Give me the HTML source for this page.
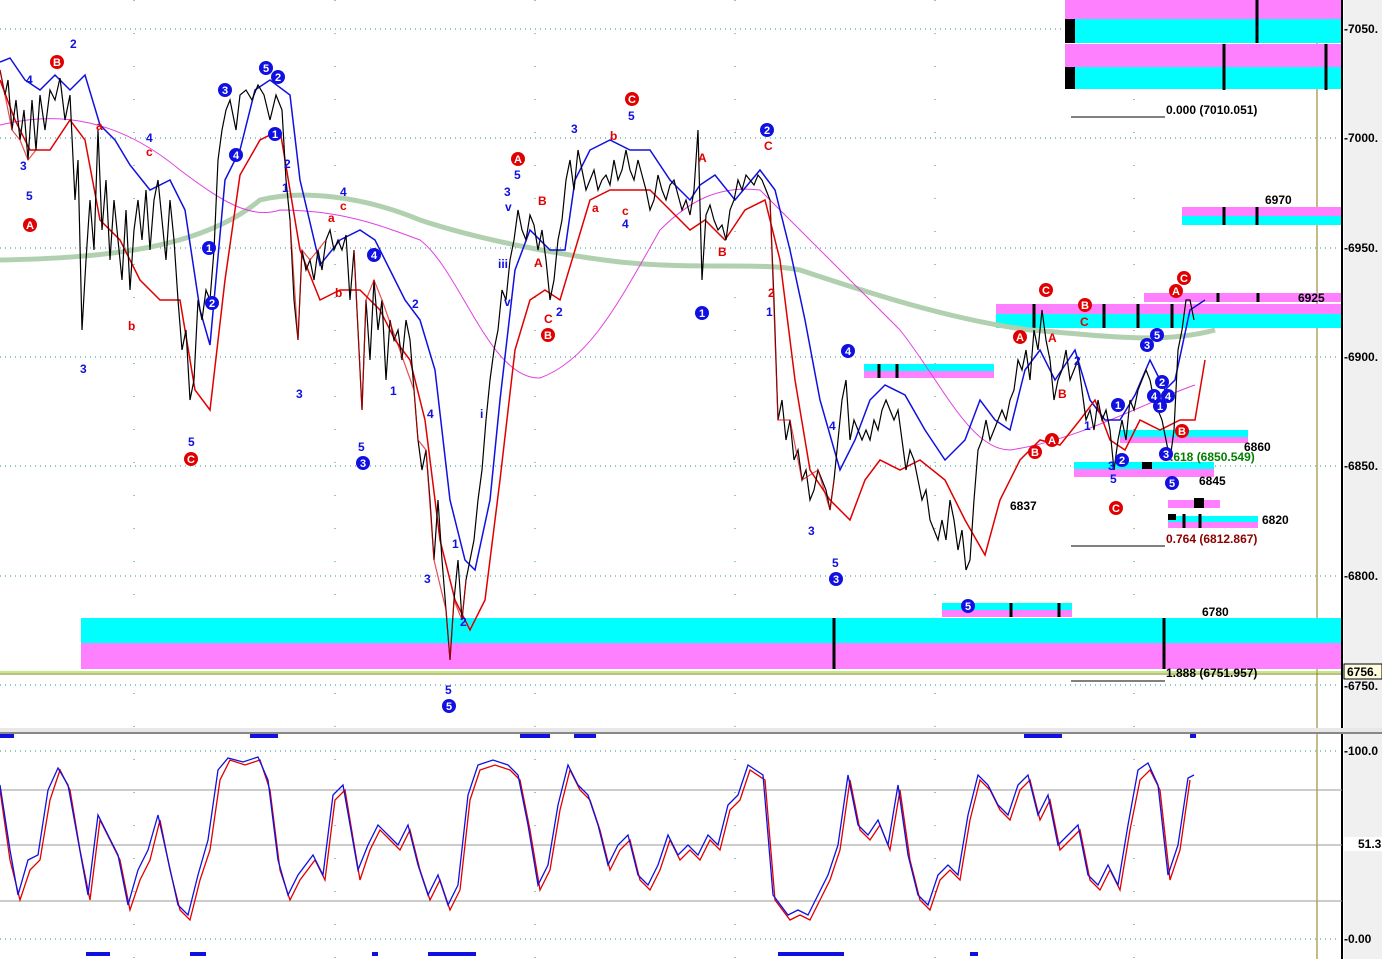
<!DOCTYPE html>
<html><head><meta charset="utf-8">
<style>
html,body{margin:0;padding:0;background:#fff;}
svg{display:block;font-family:"Liberation Sans",sans-serif;}
.t{font-size:12px;font-weight:bold;fill:#000}
.b{font-size:12px;font-weight:bold;fill:#1010e0}
.r{font-size:12px;font-weight:bold;fill:#e00000}
</style></head><body>
<svg width="1382" height="959" viewBox="0 0 1382 959">
<rect x="0" y="0" width="1382" height="959" fill="#fff"/>
<rect x="1344" y="0" width="38" height="959" fill="#f0f0f0"/>
<g stroke="#2a9090" stroke-width="1" stroke-dasharray="1,4">
<line x1="0" y1="29" x2="1340" y2="29"/><line x1="0" y1="138" x2="1340" y2="138"/>
<line x1="0" y1="248" x2="1340" y2="248"/><line x1="0" y1="357" x2="1340" y2="357"/>
<line x1="0" y1="466" x2="1340" y2="466"/><line x1="0" y1="576" x2="1340" y2="576"/>
<line x1="0" y1="685" x2="1340" y2="685"/><line x1="0" y1="751" x2="1340" y2="751"/>
<line x1="0" y1="939" x2="1340" y2="939"/>
</g>
<g stroke="#2a9090" stroke-dasharray="1,32">
<line x1="134" y1="0" x2="134" y2="959"/><line x1="335" y1="0" x2="335" y2="959"/><line x1="535" y1="0" x2="535" y2="959"/><line x1="735" y1="0" x2="735" y2="959"/><line x1="935" y1="0" x2="935" y2="959"/><line x1="1134" y1="0" x2="1134" y2="959"/>
</g>
<line x1="1317" y1="0" x2="1317" y2="728" stroke="#8a7a10"/>
<line x1="1317" y1="733" x2="1317" y2="959" stroke="#8a7a10"/>
<rect x="1065" y="0" width="277" height="19" fill="#ff80ff"/>
<rect x="1065" y="19" width="277" height="24" fill="#00ffff"/>
<rect x="1065" y="44" width="277" height="23" fill="#ff80ff"/>
<rect x="1065" y="67" width="277" height="22" fill="#00ffff"/>
<rect x="1065" y="19" width="10" height="24" fill="#000"/><rect x="1065" y="67" width="10" height="22" fill="#000"/>
<g stroke="#000" stroke-width="3"><line x1="1257" y1="0" x2="1257" y2="43"/><line x1="1224" y1="44" x2="1224" y2="90"/><line x1="1326" y1="44" x2="1326" y2="90"/></g>
<rect x="1182" y="207" width="160" height="9" fill="#ff80ff"/><rect x="1182" y="216" width="160" height="9" fill="#00ffff"/>
<rect x="996" y="304" width="346" height="10" fill="#ff80ff"/><rect x="996" y="314" width="346" height="14" fill="#00ffff"/>
<rect x="1144" y="293" width="198" height="9" fill="#ff80ff"/>
<rect x="864" y="364" width="130" height="7" fill="#00ffff"/><rect x="864" y="371" width="130" height="7" fill="#ff80ff"/>
<rect x="1120" y="430" width="128" height="7" fill="#00ffff"/><rect x="1120" y="437" width="128" height="6" fill="#ff80ff"/>
<rect x="1074" y="462" width="140" height="7" fill="#00ffff"/><rect x="1074" y="469" width="140" height="8" fill="#ff80ff"/>
<rect x="1168" y="500" width="52" height="8" fill="#ff80ff"/><rect x="1168" y="516" width="90" height="6" fill="#00ffff"/><rect x="1168" y="522" width="90" height="6" fill="#ff80ff"/>
<rect x="942" y="603" width="130" height="7" fill="#00ffff"/><rect x="942" y="610" width="130" height="7" fill="#ff80ff"/>
<rect x="81" y="618" width="1261" height="25" fill="#00ffff"/><rect x="81" y="643" width="1261" height="26" fill="#ff80ff"/>
<g stroke="#000" stroke-width="3">
<line x1="834" y1="618" x2="834" y2="669"/><line x1="1164" y1="618" x2="1164" y2="669"/>
<line x1="1224" y1="207" x2="1224" y2="225"/><line x1="1257" y1="207" x2="1257" y2="225"/>
<line x1="1034" y1="304" x2="1034" y2="328"/><line x1="1104" y1="304" x2="1104" y2="328"/><line x1="1138" y1="304" x2="1138" y2="328"/><line x1="1172" y1="304" x2="1172" y2="328"/><line x1="1218" y1="293" x2="1218" y2="302"/><line x1="1258" y1="293" x2="1258" y2="302"/>
<line x1="879" y1="364" x2="879" y2="378"/><line x1="897" y1="364" x2="897" y2="378"/>
<line x1="1011" y1="603" x2="1011" y2="617"/><line x1="1059" y1="603" x2="1059" y2="617"/>
<line x1="1184" y1="514" x2="1184" y2="528"/><line x1="1200" y1="514" x2="1200" y2="528"/>
</g>
<rect x="1194" y="498" width="10" height="10" fill="#000"/><rect x="1168" y="514" width="8" height="6" fill="#000"/><rect x="1142" y="462" width="10" height="7" fill="#000"/>
<line x1="0" y1="672" x2="1342" y2="672" stroke="#7fdc00"/>
<line x1="0" y1="674" x2="1342" y2="674" stroke="#8a7a10"/>
<g stroke="#000"><line x1="1071" y1="117" x2="1165" y2="117"/><line x1="1071" y1="546" x2="1165" y2="546"/><line x1="1071" y1="681" x2="1165" y2="681"/></g>
<text x="1166" y="114" class="t">0.000 (7010.051)</text>
<text x="1166" y="543" class="t" style="fill:#8b0000">0.764 (6812.867)</text>
<text x="1166" y="677" class="t">1.888 (6751.957)</text>
<text x="1170" y="461" class="t" style="fill:#008000">.618 (6850.549)</text>
<text x="1265" y="204" class="t">6970</text><text x="1298" y="302" class="t">6925</text>
<text x="1244" y="451" class="t">6860</text><text x="1199" y="485" class="t">6845</text>
<text x="1262" y="524" class="t">6820</text><text x="1010" y="510" class="t">6837</text><text x="1202" y="616" class="t">6780</text>
<path d="M0,260 C100,258 200,250 260,200 C300,190 360,195 420,220 C480,240 560,255 620,262 C700,270 760,262 800,270 C860,290 950,320 1030,330 C1100,335 1160,345 1215,330" fill="none" stroke="#b0d0b0" stroke-width="5"/>
<path d="M0,125 C60,110 120,120 180,170 C220,200 250,220 280,210 C340,210 380,225 420,240 C460,270 490,380 540,378 C590,360 620,300 660,230 C690,200 720,185 760,190 C800,230 850,280 900,330 C940,380 970,450 1010,450 C1080,440 1150,400 1195,385" fill="none" stroke="#e040e0" stroke-width="1"/>
<path d="M0,62 10,58 25,80 40,90 55,75 70,90 85,75 100,125 115,140 130,165 150,190 170,180 185,210 200,310 210,345 225,180 240,150 255,90 270,80 290,95 300,180 320,265 340,240 360,230 375,240 390,270 405,300 420,320 435,370 450,500 465,560 475,570 490,500 500,400 515,270 530,230 550,250 565,250 575,180 590,150 610,140 630,150 650,150 670,180 690,200 700,185 715,175 735,200 760,170 775,190 790,250 805,320 820,400 840,470 855,440 870,400 885,385 905,395 925,430 945,460 965,440 980,400 995,420 1010,430 1025,370 1040,350 1055,380 1075,350 1090,400 1105,420 1120,420 1135,395 1150,360 1165,390 1175,380 1190,310 1205,300" fill="none" stroke="#1010e0" stroke-width="1.5"/>
<path d="M0,80 15,120 30,150 50,150 70,120 85,140 100,220 120,240 140,280 160,300 180,300 195,390 210,410 225,280 240,175 260,140 280,130 300,250 320,300 340,290 360,290 380,310 395,340 410,360 425,420 440,540 455,600 470,630 485,600 500,480 515,350 530,300 545,290 560,300 575,250 590,200 610,190 630,190 650,190 670,210 690,230 705,220 725,240 745,210 765,200 780,260 795,380 810,470 830,500 850,520 865,480 880,460 900,470 920,460 945,480 965,520 985,555 1000,500 1020,460 1040,440 1060,445 1080,420 1095,400 1110,440 1125,450 1140,420 1160,430 1180,420 1195,420 1205,360" fill="none" stroke="#e00000" stroke-width="1.5"/>
<path d="M0,70 5,95 8,80 12,130 16,100 20,140 24,110 28,160 32,100 36,150 40,95 45,130 50,90 55,100 60,78 65,120 70,95 75,200 78,160 82,330 86,260 90,200 94,250 98,130 102,230 106,180 110,260 114,200 118,240 122,280 126,210 130,290 134,230 138,200 142,240 146,190 150,250 154,200 158,180 162,220 166,260 170,200 174,240 178,300 182,350 186,330 190,400 194,380 198,300 202,320 206,290 210,300 214,250 218,160 222,130 226,110 230,100 236,130 240,95 246,90 252,100 258,85 264,95 270,120 276,95 282,110 286,180 290,220 294,300 298,340 302,250 306,270 310,260 314,280 318,250 322,270 326,240 330,230 334,250 338,240 342,250 346,235 350,300 354,250 358,330 362,410 366,300 370,360 374,280 378,330 382,300 386,380 390,320 394,340 398,330 402,360 406,320 410,340 414,390 418,440 422,470 426,450 430,500 434,560 438,500 442,560 446,610 450,660 454,600 458,560 462,620 466,580 470,560 474,540 478,500 482,470 486,420 490,380 494,350 498,330 502,290 506,300 510,260 514,240 518,210 522,230 526,240 530,215 534,225 538,250 542,230 546,260 550,300 554,280 558,240 562,220 566,180 570,160 574,190 578,150 582,170 586,190 590,180 594,170 598,190 602,180 606,175 610,185 614,160 618,180 622,170 626,150 630,170 634,180 638,160 642,175 646,190 650,210 654,200 658,175 662,190 666,200 670,185 674,180 678,195 682,210 686,200 690,215 694,190 698,130 702,280 706,215 710,205 714,220 718,230 722,225 726,240 730,210 734,200 738,180 742,190 746,175 750,180 754,185 758,175 762,180 766,190 770,200 774,300 778,420 782,400 786,440 790,420 794,460 798,450 802,480 806,470 810,500 814,490 818,470 822,480 826,490 830,510 834,480 838,440 842,400 846,380 850,440 854,420 858,430 862,440 866,430 870,440 874,420 878,430 882,410 886,400 890,410 894,420 898,410 902,440 906,470 910,450 914,460 918,480 922,500 926,490 930,520 934,530 938,540 942,520 946,540 950,500 954,520 958,550 962,530 966,570 970,560 974,500 978,450 982,440 986,420 990,440 994,430 998,420 1002,410 1006,420 1010,400 1014,390 1018,360 1022,370 1026,350 1030,380 1034,330 1038,350 1042,310 1046,340 1050,360 1054,400 1058,380 1062,370 1066,350 1070,380 1074,370 1078,360 1082,390 1086,420 1090,410 1094,430 1098,400 1102,420 1106,410 1110,430 1114,470 1118,440 1122,420 1126,440 1130,400 1134,410 1138,390 1142,380 1146,370 1150,380 1154,400 1158,410 1162,420 1166,440 1170,460 1174,430 1178,350 1182,330 1186,300 1190,300 1194,320" fill="none" stroke="#000" stroke-width="1.2"/>
<path d="M0,70 5,95 12,130 20,140 28,160 36,150 M290,220 298,340 302,250 310,260 318,250 326,240 M354,250 362,410 366,300 374,280 382,300 414,390 418,440 426,450 434,560 446,610 450,660 454,600 462,620 466,580 M770,200 778,420 790,420 802,480 818,470 830,510 834,480" fill="none" stroke="#e00000" stroke-width="1.2" opacity="0.7"/>
<line x1="1342" y1="0" x2="1342" y2="728" stroke="#000" stroke-width="2"/>
<line x1="1342" y1="733" x2="1342" y2="959" stroke="#000" stroke-width="2"/>
<g><text x="1344" y="33" class="t">-7050.</text><text x="1344" y="142" class="t">-7000.</text><text x="1344" y="252" class="t">-6950.</text><text x="1344" y="361" class="t">-6900.</text><text x="1344" y="470" class="t">-6850.</text><text x="1344" y="580" class="t">-6800.</text><text x="1344" y="690" class="t">-6750.</text>
<text x="1344" y="755" class="t">-100.0</text><text x="1344" y="943" class="t">-0.00</text></g>
<rect x="1344" y="664" width="38" height="15" fill="#ffffe0" stroke="#000"/><text x="1347" y="676" class="t">6756.</text>
<rect x="1344" y="837" width="38" height="14" fill="#fff"/><text x="1358" y="848" class="t">51.3</text>
<rect x="0" y="728" width="1382" height="5" fill="#e8e8e8"/><line x1="0" y1="733" x2="1382" y2="733" stroke="#888" stroke-width="2"/>
<g stroke="#999"><line x1="0" y1="790" x2="1342" y2="790"/><line x1="0" y1="845" x2="1342" y2="845"/><line x1="0" y1="901" x2="1342" y2="901"/></g>
<path d="M0,790 10,860 20,900 30,870 40,860 50,800 60,770 70,790 80,850 90,900 100,820 110,840 120,860 130,910 140,880 150,860 160,820 170,870 180,910 190,920 200,880 210,850 220,780 230,760 245,765 260,760 270,790 280,870 290,900 300,880 315,860 325,880 335,800 345,790 360,880 370,850 380,830 390,840 400,850 410,830 420,870 430,900 440,880 450,910 460,890 470,800 480,770 495,765 510,770 520,780 530,830 540,890 550,870 560,810 570,770 580,790 590,800 600,830 610,870 620,850 630,840 640,880 650,890 660,870 670,840 680,860 690,850 700,860 710,840 720,850 730,810 740,800 750,770 765,780 775,900 790,920 800,915 810,920 820,900 830,880 840,850 850,780 860,830 870,840 880,825 890,850 900,790 910,860 920,900 930,910 940,880 950,870 960,880 970,820 980,780 990,790 1000,810 1010,820 1020,790 1030,780 1040,820 1050,800 1060,850 1070,840 1080,830 1090,880 1100,890 1110,870 1120,890 1130,830 1140,780 1150,770 1160,790 1170,880 1180,850 1190,780" fill="none" stroke="#e00000" stroke-width="1.3"/>
<path d="M0,785 10,850 18,895 28,860 38,855 48,790 58,768 68,785 78,840 88,895 98,815 108,835 118,855 128,905 138,870 148,850 158,815 168,860 178,905 188,915 198,875 208,840 218,770 228,758 243,762 258,757 268,780 278,860 288,895 298,875 313,855 323,875 333,795 343,785 358,870 368,845 378,825 388,835 398,845 408,825 418,865 428,895 438,875 448,905 458,885 468,795 478,765 493,760 508,765 518,775 528,825 538,885 548,865 558,805 568,765 578,785 588,795 598,825 608,865 618,845 628,835 638,875 648,885 658,865 668,835 678,855 688,845 698,855 708,835 718,845 728,805 738,795 748,765 763,775 773,895 788,915 798,910 808,915 818,895 828,875 838,845 848,775 858,825 868,835 878,820 888,845 898,785 908,855 918,895 928,905 938,875 948,865 958,875 968,815 978,775 988,785 998,805 1008,815 1018,785 1028,775 1038,815 1048,795 1058,845 1068,835 1078,825 1088,875 1098,885 1108,865 1118,885 1128,825 1138,770 1148,763 1158,785 1168,875 1178,845 1188,778 1194,775" fill="none" stroke="#1010e0" stroke-width="1.3"/>
<g fill="#1010e0"><rect x="0" y="734" width="14" height="4"/><rect x="250" y="734" width="28" height="4"/><rect x="520" y="734" width="30" height="4"/><rect x="574" y="734" width="22" height="4"/><rect x="1024" y="734" width="38" height="4"/><rect x="1190" y="734" width="6" height="4"/>
<rect x="86" y="952" width="24" height="4"/><rect x="190" y="952" width="16" height="4"/><rect x="372" y="952" width="6" height="4"/><rect x="428" y="952" width="48" height="4"/><rect x="778" y="952" width="66" height="4"/><rect x="970" y="952" width="8" height="4"/></g>
<g font-size="11" font-weight="bold" text-anchor="middle" fill="#fff">
<g fill="#e00000"><circle cx="57" cy="62" r="7"/><circle cx="30" cy="225" r="7"/><circle cx="191" cy="459" r="7"/><circle cx="632" cy="99" r="7"/><circle cx="518" cy="159" r="7"/><circle cx="548" cy="335" r="7"/><circle cx="1046" cy="290" r="7"/><circle cx="1085" cy="305" r="7"/><circle cx="1020" cy="337" r="7"/><circle cx="1052" cy="440" r="7"/><circle cx="1035" cy="452" r="7"/><circle cx="1116" cy="508" r="7"/><circle cx="1184" cy="278" r="7"/><circle cx="1176" cy="291" r="7"/><circle cx="1182" cy="431" r="7"/></g>
<g fill="#1010e0"><circle cx="266" cy="68" r="7"/><circle cx="278" cy="77" r="7"/><circle cx="225" cy="90" r="7"/><circle cx="275" cy="134" r="7"/><circle cx="236" cy="155" r="7"/><circle cx="209" cy="248" r="7"/><circle cx="212" cy="303" r="7"/><circle cx="374" cy="255" r="7"/><circle cx="363" cy="463" r="7"/><circle cx="449" cy="706" r="7"/><circle cx="767" cy="130" r="7"/><circle cx="702" cy="313" r="7"/><circle cx="848" cy="351" r="7"/><circle cx="836" cy="579" r="7"/><circle cx="968" cy="606" r="7"/><circle cx="1157" cy="335" r="7"/><circle cx="1147" cy="345" r="7"/><circle cx="1118" cy="405" r="7"/><circle cx="1162" cy="382" r="7"/><circle cx="1154" cy="396" r="7"/><circle cx="1168" cy="396" r="7"/><circle cx="1160" cy="406" r="7"/><circle cx="1122" cy="460" r="7"/><circle cx="1166" cy="454" r="7"/><circle cx="1172" cy="483" r="7"/></g>
<text x="57" y="66">B</text><text x="30" y="229">A</text><text x="191" y="463">C</text><text x="632" y="103">C</text><text x="518" y="163">A</text><text x="548" y="339">B</text><text x="1046" y="294">C</text><text x="1085" y="309">B</text><text x="1020" y="341">A</text><text x="1052" y="444">A</text><text x="1035" y="456">B</text><text x="1116" y="512">C</text><text x="1184" y="282">C</text><text x="1176" y="295">A</text><text x="1182" y="435">B</text>
<text x="266" y="72">5</text><text x="278" y="81">2</text><text x="225" y="94">3</text><text x="275" y="138">1</text><text x="236" y="159">4</text><text x="209" y="252">1</text><text x="212" y="307">2</text><text x="374" y="259">4</text><text x="363" y="467">3</text><text x="449" y="710">5</text><text x="767" y="134">2</text><text x="702" y="317">1</text><text x="848" y="355">4</text><text x="836" y="583">3</text><text x="968" y="610">5</text><text x="1157" y="339">5</text><text x="1147" y="349">3</text><text x="1118" y="409">1</text><text x="1162" y="386">2</text><text x="1154" y="400">4</text><text x="1168" y="400">4</text><text x="1160" y="410">1</text><text x="1122" y="464">2</text><text x="1166" y="458">3</text><text x="1172" y="487">5</text>
</g>
<g font-size="11" font-weight="bold">
<text x="20" y="170" class="b">3</text><text x="26" y="200" class="b">5</text><text x="26" y="84" class="b">4</text><text x="70" y="48" class="b">2</text><text x="80" y="373" class="b">3</text><text x="96" y="130" class="r">a</text><text x="146" y="142" class="b">4</text><text x="146" y="156" class="r">c</text><text x="128" y="330" class="r">b</text><text x="188" y="446" class="b">5</text>
<text x="284" y="168" class="b">2</text><text x="282" y="192" class="b">1</text><text x="296" y="398" class="b">3</text><text x="340" y="196" class="b">4</text><text x="340" y="210" class="r">c</text><text x="328" y="222" class="r">a</text><text x="335" y="297" class="r">b</text><text x="358" y="451" class="b">5</text><text x="412" y="308" class="b">2</text><text x="390" y="395" class="b">1</text><text x="427" y="418" class="b">4</text><text x="424" y="583" class="b">3</text><text x="452" y="548" class="b">1</text><text x="460" y="626" class="b">2</text><text x="445" y="694" class="b">5</text>
<text x="480" y="418" class="b">i</text><text x="498" y="268" class="b">iii</text><text x="504" y="306" class="b">v</text><text x="504" y="196" class="b">3</text><text x="505" y="211" class="b">v</text><text x="514" y="179" class="b">5</text><text x="538" y="205" class="r">B</text><text x="534" y="267" class="r">A</text><text x="544" y="323" class="r">C</text><text x="556" y="316" class="b">2</text><text x="571" y="133" class="b">3</text><text x="592" y="212" class="r">a</text><text x="610" y="140" class="r">b</text><text x="622" y="215" class="r">c</text><text x="622" y="228" class="b">4</text><text x="628" y="120" class="b">5</text><text x="698" y="162" class="r">A</text><text x="718" y="256" class="r">B</text><text x="764" y="150" class="r">C</text>
<text x="768" y="297" class="r">2</text><text x="766" y="316" class="b">1</text><text x="829" y="430" class="b">4</text><text x="808" y="535" class="b">3</text><text x="832" y="567" class="b">5</text><text x="1048" y="342" class="r">A</text><text x="1080" y="326" class="r">C</text><text x="1058" y="398" class="r">B</text><text x="1074" y="365" class="b">2</text><text x="1084" y="430" class="b">1</text><text x="1108" y="470" class="b">3</text><text x="1110" y="483" class="b">5</text>
</g>
</svg>
</body></html>
